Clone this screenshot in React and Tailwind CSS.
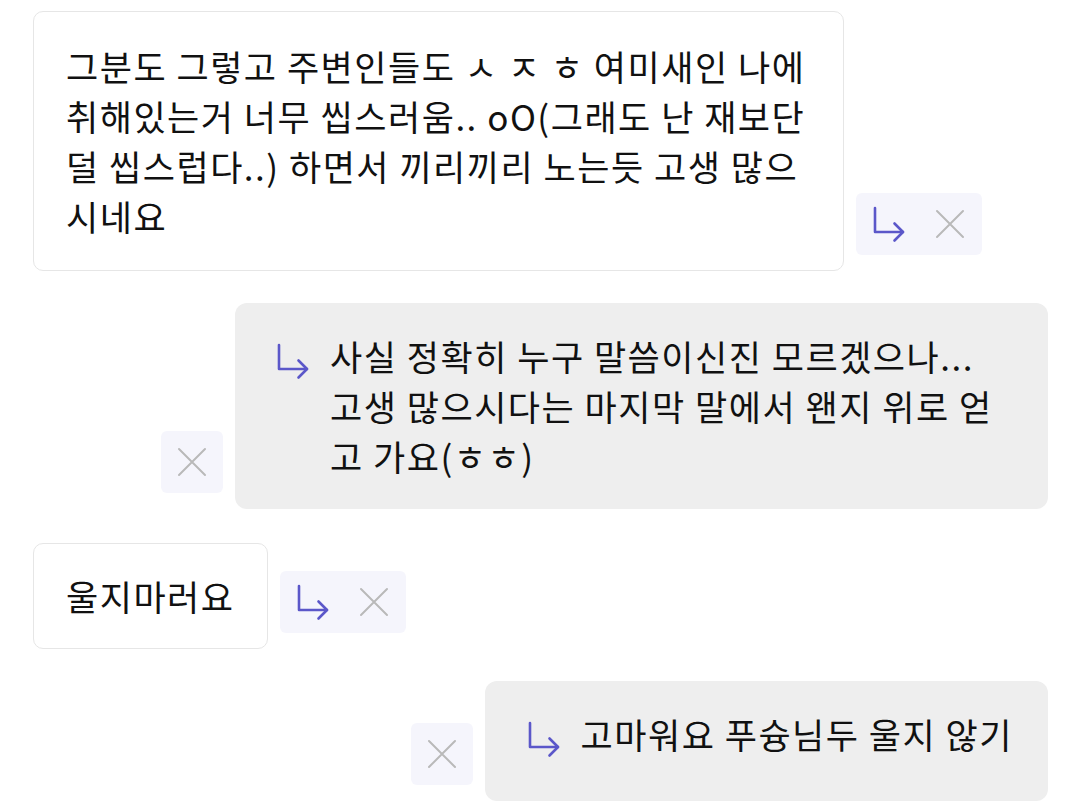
import React from "react";

const font = { fontFamily: '"Noto Sans CJK KR", "Noto Sans", sans-serif' };

function ReplyIcon() {
  return (
    <svg width="32" height="37" viewBox="0 0 32 37" fill="none" stroke="#5b57c9" strokeWidth="2.6" strokeLinecap="round" strokeLinejoin="round">
      <path d="M2 2V26H30" />
      <path d="M21.5 17.5L30 26L21.5 34.5" />
    </svg>
  );
}

function CloseIcon() {
  return (
    <svg width="30" height="30" viewBox="0 0 30 30" fill="none" stroke="#b9b9b9" strokeWidth="2" strokeLinecap="round">
      <path d="M2 2L28 28M28 2L2 28" />
    </svg>
  );
}

function Actions({ reply = true }) {
  return (
    <div className="mb-4 flex h-[62px] items-center gap-[30px] rounded-md bg-[#f5f5fc] px-[17px]">
      {reply && <ReplyIcon />}
      <CloseIcon />
    </div>
  );
}

function CloseOnly() {
  return (
    <div className="mb-4 flex h-[62px] w-[62px] items-center justify-center rounded-md bg-[#f5f5fc]">
      <CloseIcon />
    </div>
  );
}

export default function App() {
  return (
    <div className="min-h-screen w-full bg-white text-[35px] leading-[50px] tracking-[1.5px] text-[#111]" style={font}>
      <div className="flex flex-col gap-8 pl-[33px] pr-[27px] pt-[11px]">
        {/* 받은 메시지 */}
        <div className="flex items-end gap-3">
          <div className="w-[811px] rounded-[10px] border border-[#e6e6e6] bg-white px-8 py-[29px]">
            그분도 그렇고 주변인들도 ㅅ ㅈ ㅎ 여미새인 나에
            <br />
            취해있는거 너무 씹스러움.. oO(그래도 난 재보단
            <br />
            덜 씹스럽다..) 하면서 끼리끼리 노는듯 고생 많으
            <br />
            시네요
          </div>
          <Actions />
        </div>

        {/* 보낸 답장 */}
        <div className="flex items-end justify-end gap-3">
          <CloseOnly />
          <div className="flex w-[813px] gap-[21px] rounded-xl bg-[#eeeeee] py-7 pl-[42px] pr-6">
            <div className="pt-[12px]">
              <ReplyIcon />
            </div>
            <div>
              사실 정확히 누구 말씀이신진 모르겠으나...
              <br />
              고생 많으시다는 마지막 말에서 왠지 위로 얻
              <br />
              고 가요(ㅎㅎ)
            </div>
          </div>
        </div>

        <div className="mt-[2px] flex items-end gap-3">
          <div className="rounded-[10px] border border-[#e6e6e6] bg-white px-8 py-[27px]">울지마러요</div>
          <Actions />
        </div>

        <div className="flex items-end justify-end gap-3">
          <CloseOnly />
          <div className="flex gap-[21px] rounded-xl bg-[#eeeeee] pb-[42px] pl-[43px] pr-[35px] pt-7">
            <div className="pt-[12px]">
              <ReplyIcon />
            </div>
            <div>고마워요 푸슝님두 울지 않기</div>
          </div>
        </div>
      </div>
    </div>
  );
}
